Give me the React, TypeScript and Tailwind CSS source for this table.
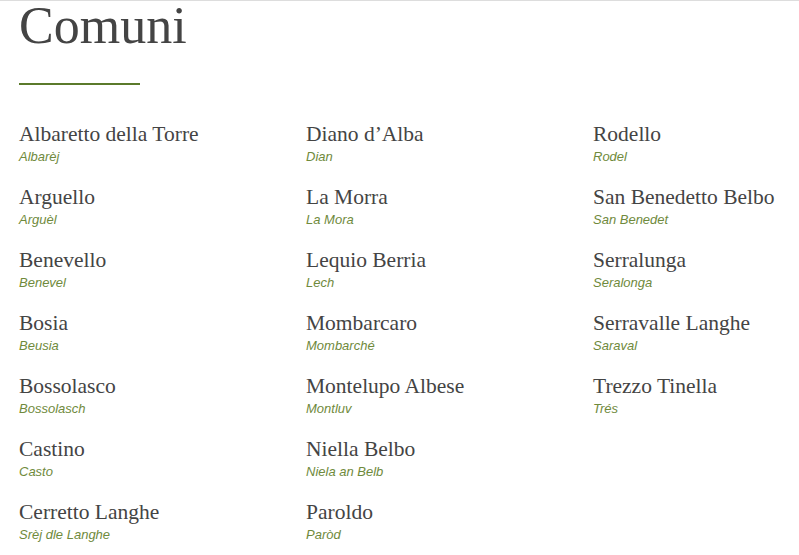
import React from 'react';

type Comune = { name: string; local: string };

const columns: Comune[][] = [
  [
    { name: 'Albaretto della Torre', local: 'Albarèj' },
    { name: 'Arguello', local: 'Arguèl' },
    { name: 'Benevello', local: 'Benevel' },
    { name: 'Bosia', local: 'Beusia' },
    { name: 'Bossolasco', local: 'Bossolasch' },
    { name: 'Castino', local: 'Casto' },
    { name: 'Cerretto Langhe', local: 'Srèj dle Langhe' },
  ],
  [
    { name: 'Diano d’Alba', local: 'Dian' },
    { name: 'La Morra', local: 'La Mora' },
    { name: 'Lequio Berria', local: 'Lech' },
    { name: 'Mombarcaro', local: 'Mombarché' },
    { name: 'Montelupo Albese', local: 'Montluv' },
    { name: 'Niella Belbo', local: 'Niela an Belb' },
    { name: 'Paroldo', local: 'Paròd' },
  ],
  [
    { name: 'Rodello', local: 'Rodel' },
    { name: 'San Benedetto Belbo', local: 'San Benedet' },
    { name: 'Serralunga', local: 'Seralonga' },
    { name: 'Serravalle Langhe', local: 'Saraval' },
    { name: 'Trezzo Tinella', local: 'Trés' },
  ],
];

const ComuneItem: React.FC<{ item: Comune }> = ({ item }) => (
  <div className="h-[63px]">
    <div className="font-['Liberation_Serif',serif] text-[21.5px] leading-[26px] text-[#444]">{item.name}</div>
    <div className="font-['Liberation_Sans',sans-serif] italic text-[13px] leading-[19px] text-[#6f8a3c]">
      {item.local}
    </div>
  </div>
);

export default function App() {
  return (
    <div className="w-[799px] h-[555px] overflow-hidden bg-white border-t border-[#ddd]">
      <div className="px-[19px]">
        <h1 className="font-['Liberation_Serif',serif] text-[52px] leading-[56px] text-[#444] mt-[-3px]">Comuni</h1>
        <div className="mt-[29px] w-[121px] h-[2px] bg-[#5b7a2b]" />
        <div className="mt-[36px] grid grid-cols-[287px_287px_1fr]">
          {columns.map((col, i) => (
            <div key={i} className="flex flex-col">
              {col.map((c) => (
                <ComuneItem key={c.name} item={c} />
              ))}
            </div>
          ))}
        </div>
      </div>
    </div>
  );
}
